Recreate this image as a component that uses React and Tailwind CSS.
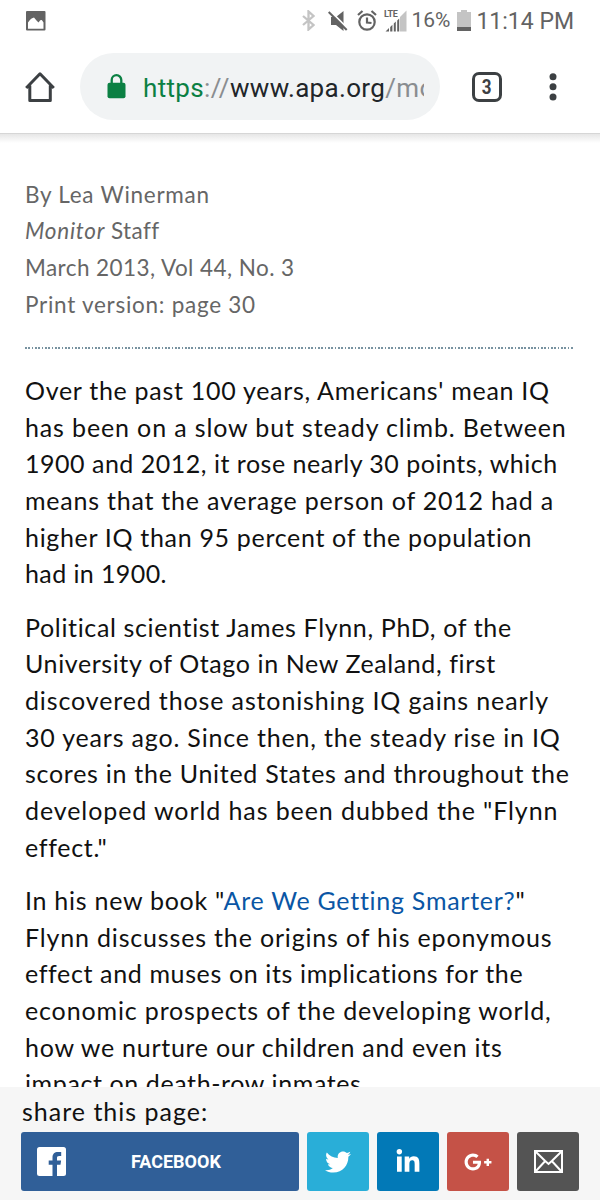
import React from 'react';
import { FaTwitter, FaLinkedinIn, FaGooglePlusG } from 'react-icons/fa';

function StatusBar() {
  return (
    <div className="flex h-[41px] items-center pl-[26px] pr-[26px] font-['Roboto',sans-serif] text-[#636363]">
      <svg className="h-[20px] w-[20px]" viewBox="0 0 20 20">
        <path fill="currentColor" fillRule="evenodd" d="M1 0h17.500q1 0 1 1v17.500q0 1-1 1H1Q0 19.500 0 18.500V1Q0 0 1 0ZM2 17.700h15.500V11.500l-1.700-2.500-1.600.2-1.700 2.400-2-2-2.500-3-2.400 1-1.500 1.200L2 11.500Z" />
      </svg>
      <svg className="ml-auto h-[21px] w-[13px]" viewBox="0 0 13 21" fill="none" stroke="#c4c4c4" strokeWidth="2.300">
        <path d="M1 6l10.500 9L6.500 19.500v-18L11.500 6 1 15" />
      </svg>
      <svg className="ml-[13px] h-[20px] w-[20px]" viewBox="0 0 20 20">
        <path fill="currentColor" d="M3 6h5l7.500-6v20L8 14H3Z" />
        <path stroke="#fff" strokeWidth="2" d="M2.200 0l18 18" />
        <path stroke="currentColor" strokeWidth="2" d="M.7 1l18 18" />
      </svg>
      <svg className="ml-[9px] h-[21px] w-[20px]" viewBox="0 0 20 21" fill="none" stroke="currentColor" strokeWidth="2.200">
        <circle cx="10" cy="12" r="7.700" />
        <path d="M10 7.500V12.500l4.500.500M1 5l4.500-4M19 5l-4.500-4" />
      </svg>
      <svg className="ml-[8px] h-[22px] w-[22px] overflow-visible" viewBox="0 0 22 22">
        <path fill="#c4c4c4" d="M15 7l6.500-6.500v21H15Z" />
        <path fill="currentColor" d="M.5 21.500l3.500-3.500v3.500ZM5.200 17l2.200-2.200v6.700H5.200ZM8.800 13.500l2-2v10h-2ZM12.200 10.500l2-2v13h-2Z" />
        <text x="-1" y="7" fill="currentColor" fontSize="9" fontWeight="700" letterSpacing="-.8" textLength="13">LTE</text>
      </svg>
      <span className="ml-[4px] pt-px text-[21px]">16%</span>
      <svg className="ml-[7px] h-[21px] w-[14px]" viewBox="0 0 14 21">
        <path fill="#c4c4c4" d="M4 0h6v2h4v15H0V2h4Z" />
        <path fill="currentColor" d="M0 17h14v4H0Z" />
      </svg>
      <span className="ml-[5px] pt-[3px] text-[23px]">11:14 PM</span>
    </div>
  );
}

function Toolbar() {
  return (
    <div className="flex h-[92px] items-start pl-[25px] text-[#3c4043]">
      <svg className="mt-[30px] h-[32px] w-[30px]" viewBox="0 0 30 32" fill="none" stroke="currentColor" strokeWidth="3">
        <path d="M1.200 17L15 2.800l13.800 14.200M4.800 14.500v15h20.500v-15" strokeLinejoin="round" />
      </svg>
      <div className="ml-[25px] mt-[12px] flex h-[67px] w-[360px] items-center rounded-full bg-[#f1f3f4] pl-[27px] pr-[16px]">
        <svg className="mb-px h-[25px] w-[19px] shrink-0" viewBox="0 0 19 25">
          <path fill="none" stroke="#0b8043" strokeWidth="2.300" d="M4.700 10V6a4.800 4.800 0 0 1 9.600 0v4" />
          <rect x=".5" y="8.700" width="18" height="15.600" rx="2" fill="#0b8043" />
        </svg>
        <div className="ml-[17px] flex-1 overflow-hidden whitespace-nowrap pt-[4px] font-['Roboto',sans-serif] text-[26px] tracking-[0.33px] text-[#212529]">
          <span className="text-[#0b8043]">https</span>
          <span className="text-[#8a8d90]">://</span>
          <span>www.apa.org</span>
          <span className="text-[#8a8d90]">/mo</span>
        </div>
      </div>
      <div className="ml-[32px] mt-[31px] flex h-[30px] w-[30px] items-center justify-center rounded-[7px] border-[3px] border-[#3c4043]">
        <span className="scale-x-85 font-['Roboto',sans-serif] text-[20px] font-bold leading-none">3</span>
      </div>
      <svg className="ml-[47px] mt-[31px] h-[30px] w-[8px]" viewBox="0 0 8 30" fill="currentColor">
        <circle cx="4" cy="4.700" r="3.500" />
        <circle cx="4" cy="14.800" r="3.500" />
        <circle cx="4" cy="25" r="3.500" />
      </svg>
    </div>
  );
}

function Byline() {
  return (
    <div className="text-[22.5px] text-[#666]">
      <div className="tracking-[0.73px]">By Lea Winerman</div>
      <div><em className="tracking-[0.75px]">Monitor</em> <span className="tracking-[0.4px]">Staff</span></div>
      <div className="tracking-[0.43px]">March 2013, Vol 44, No. 3</div>
      <div className="tracking-[0.73px]">Print version: page 30</div>
    </div>
  );
}

function Article() {
  return (
    <main className="min-h-0 flex-1 overflow-hidden whitespace-nowrap px-[25px] leading-[36.67px]">
      <div className="-mx-[25px] h-[10px] border-t border-[#d6d6d6] bg-linear-to-b from-[#e6e6e6] to-white" />
      <div className="pt-[33.5px]">
        <Byline />
      </div>
      <div className="mt-[24px] h-[2px] w-[549px] bg-[repeating-linear-gradient(90deg,#7892a0_0_1.67px,transparent_1.67px_3.33px)]" />
      <div className="mt-[22.7px] flex flex-col gap-[16.67px] text-[25px] text-[#111]">
        <div>
          <div className="tracking-[0.71px]">Over the past 100 years, Americans' mean IQ</div>
          <div className="tracking-[0.86px]">has been on a slow but steady climb. Between</div>
          <div className="tracking-[0.51px]">1900 and 2012, it rose nearly 30 points, which</div>
          <div className="tracking-[0.77px]">means that the average person of 2012 had a</div>
          <div className="tracking-[0.68px]">higher IQ than 95 percent of the population</div>
          <div className="tracking-[0.4px]">had in 1900.</div>
        </div>
        <div>
          <div className="tracking-[0.65px]">Political scientist James Flynn, PhD, of the</div>
          <div className="tracking-[0.6px]">University of Otago in New Zealand, first</div>
          <div className="tracking-[0.87px]">discovered those astonishing IQ gains nearly</div>
          <div className="tracking-[0.82px]">30 years ago. Since then, the steady rise in IQ</div>
          <div className="tracking-[0.72px]">scores in the United States and throughout the</div>
          <div className="tracking-[0.91px]">developed world has been dubbed the "Flynn</div>
          <div className="tracking-[0.7px]">effect."</div>
        </div>
        <div>
          <div className="tracking-[0.73px]">In his new book "<a href="#" className="text-[#0a56a5]">Are We Getting Smarter?</a>"</div>
          <div className="tracking-[0.83px]">Flynn discusses the origins of his eponymous</div>
          <div className="tracking-[0.63px]">effect and muses on its implications for the</div>
          <div className="tracking-[0.85px]">economic prospects of the developing world,</div>
          <div className="tracking-[0.72px]">how we nurture our children and even its</div>
          <div className="tracking-[0.6px]">impact on death-row inmates.</div>
        </div>
      </div>
    </main>
  );
}

function ShareBar() {
  return (
    <footer className="h-[113px] shrink-0 bg-[#f6f6f6] px-[21px]">
      <div className="h-[45px] pl-px pt-[6px] text-[25px] leading-[36.67px] tracking-[1px] text-[#111]">share this page:</div>
      <div className="flex h-[59px] gap-[8px] text-white">
        <button className="flex w-[278px] items-center rounded-[3px] bg-[#305f98] pl-[16px]">
          <svg className="mb-px h-[29px] w-[29px]" viewBox="0 0 29 29">
            <rect width="29" height="29" rx="2.500" fill="#fff" />
            <path fill="#305f98" d="M15.500 29V17.800H11.700v-4.400h3.800V10.500c0-3.700 2.100-5.500 5.400-5.500h3.300v4.100h-2.100c-1.700 0-2.100.8-2.100 2v2.300h4.100l-.6 4.400H20V29Z" />
          </svg>
          <span className="ml-[65px] font-['Roboto',sans-serif] text-[18px] font-bold">FACEBOOK</span>
        </button>
        <button className="flex w-[62px] items-center justify-center rounded-[3px] bg-[#29aed8]">
          <FaTwitter size={26} />
        </button>
        <button className="flex w-[62px] items-center justify-center rounded-[3px] bg-[#0279b7]">
          <FaLinkedinIn size={26} />
        </button>
        <button className="flex w-[62px] items-center justify-center rounded-[3px] bg-[#c55247]">
          <FaGooglePlusG size={28} />
        </button>
        <button className="flex w-[62px] items-center justify-center rounded-[3px] bg-[#545454]">
          <svg className="mb-px h-[23px] w-[29px]" viewBox="0 0 29 23" fill="none" stroke="currentColor" strokeWidth="2">
            <path d="M1 1h27v21H1ZM1.500 1.500l9.700 9.500 3.300 3 3.300-3 9.700-9.500M1.500 21.500l9.700-10.500M27.500 21.500l-9.700-10.500" />
          </svg>
        </button>
      </div>
    </footer>
  );
}

function App() {
  return (
    <div className="flex h-[1200px] w-[600px] flex-col overflow-hidden bg-white font-['Lato',sans-serif]">
      <StatusBar />
      <Toolbar />
      <Article />
      <ShareBar />
    </div>
  );
}

export default App;
